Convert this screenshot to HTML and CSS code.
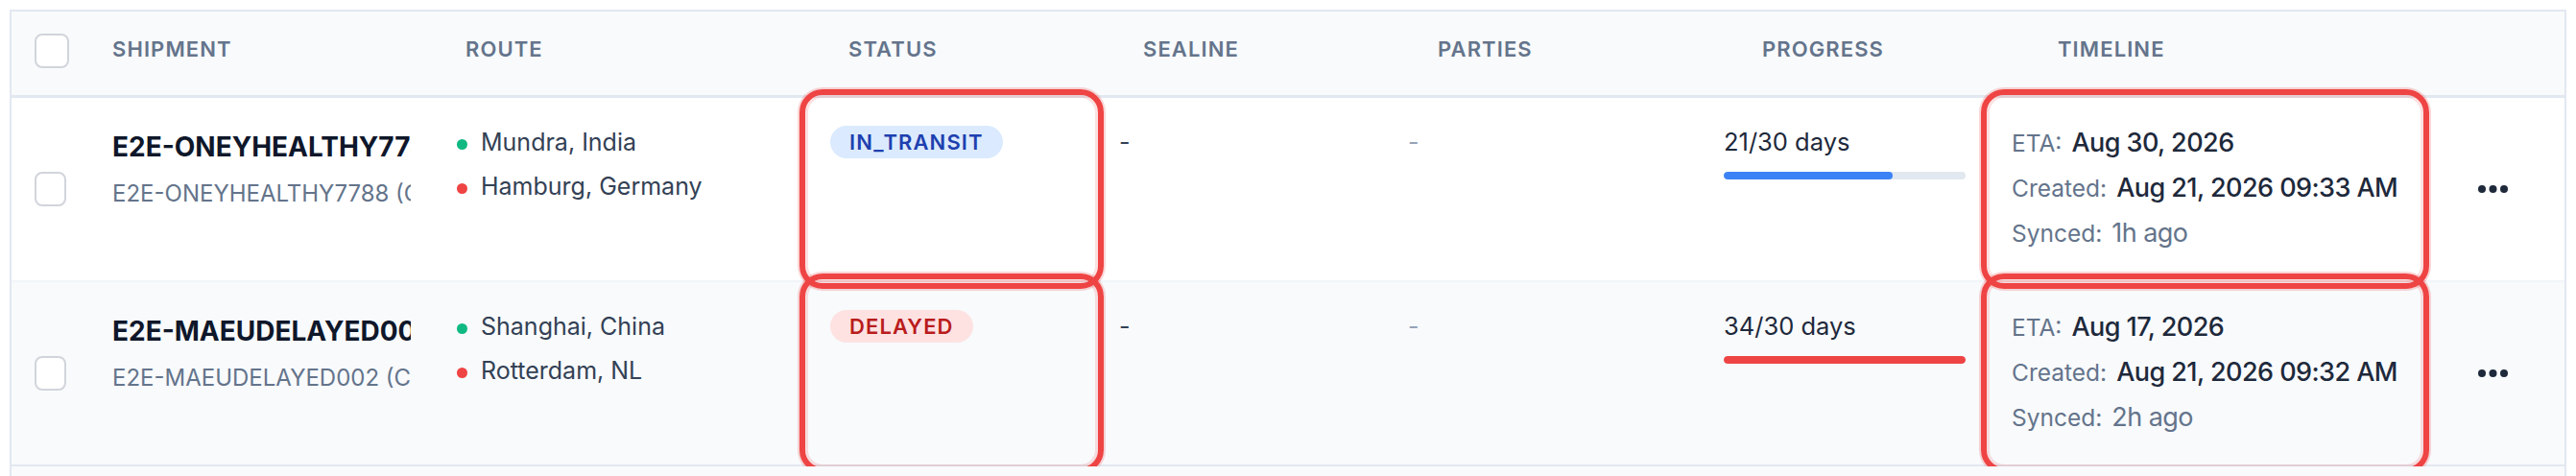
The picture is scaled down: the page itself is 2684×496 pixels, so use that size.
FILE: index.html
```html
<!DOCTYPE html>
<html lang="en">
<head>
<meta charset="utf-8">
<title>Shipments</title>
<link rel="stylesheet" href="styles.css">
</head>
<body>
<div class="table">
  <div class="thead">
    <div class="th th-check"><span class="checkbox"></span></div>
    <div class="th">Shipment</div>
    <div class="th">Route</div>
    <div class="th">Status</div>
    <div class="th">Sealine</div>
    <div class="th">Parties</div>
    <div class="th">Progress</div>
    <div class="th">Timeline</div>
    <div class="th"></div>
  </div>

  <div class="row">
    <div class="td td-check"><span class="checkbox"></span></div>
    <div class="td td-ship">
      <div class="ship-id">E2E-ONEYHEALTHY7788</div>
      <div class="ship-sub">E2E-ONEYHEALTHY7788 (ONE)</div>
    </div>
    <div class="td td-route">
      <div class="stop"><span class="dot dot-green"></span>Mundra, India</div>
      <div class="stop"><span class="dot dot-red"></span>Hamburg, Germany</div>
    </div>
    <div class="td td-status hl"><span class="badge badge-transit">IN_TRANSIT</span></div>
    <div class="td td-text">-</div>
    <div class="td td-text td-muted">-</div>
    <div class="td td-progress">
      <div class="prog-text">21/30 days</div>
      <div class="bar"><div class="fill fill-blue" style="width:70%"></div></div>
    </div>
    <div class="td td-timeline hl">
      <div class="tl"><span class="tl-label">ETA:</span><span class="tl-value">Aug 30, 2026</span></div>
      <div class="tl"><span class="tl-label">Created:</span><span class="tl-value">Aug 21, 2026 09:33 AM</span></div>
      <div class="tl"><span class="tl-label">Synced:</span><span class="tl-value tl-muted">1h ago</span></div>
    </div>
    <div class="td td-actions">
      <svg class="more" width="31" height="8" viewBox="0 0 31 8"><circle cx="4" cy="4" r="4"/><circle cx="15.5" cy="4" r="4"/><circle cx="27" cy="4" r="4"/></svg>
    </div>
  </div>

  <div class="row row-alt">
    <div class="td td-check"><span class="checkbox"></span></div>
    <div class="td td-ship">
      <div class="ship-id">E2E-MAEUDELAYED002</div>
      <div class="ship-sub">E2E-MAEUDELAYED002 (CMA)</div>
    </div>
    <div class="td td-route">
      <div class="stop"><span class="dot dot-green"></span>Shanghai, China</div>
      <div class="stop"><span class="dot dot-red"></span>Rotterdam, NL</div>
    </div>
    <div class="td td-status hl"><span class="badge badge-delayed">DELAYED</span></div>
    <div class="td td-text">-</div>
    <div class="td td-text td-muted">-</div>
    <div class="td td-progress">
      <div class="prog-text">34/30 days</div>
      <div class="bar"><div class="fill fill-red" style="width:100%"></div></div>
    </div>
    <div class="td td-timeline hl">
      <div class="tl"><span class="tl-label">ETA:</span><span class="tl-value">Aug 17, 2026</span></div>
      <div class="tl"><span class="tl-label">Created:</span><span class="tl-value">Aug 21, 2026 09:32 AM</span></div>
      <div class="tl"><span class="tl-label">Synced:</span><span class="tl-value tl-muted">2h ago</span></div>
    </div>
    <div class="td td-actions">
      <svg class="more" width="31" height="8" viewBox="0 0 31 8"><circle cx="4" cy="4" r="4"/><circle cx="15.5" cy="4" r="4"/><circle cx="27" cy="4" r="4"/></svg>
    </div>
  </div>

  <div class="row-stub"></div>
</div>
</body>
</html>
```

FILE: styles.css
```css
* { box-sizing: border-box; }

html, body {
  margin: 0;
  height: 496px;
  overflow: hidden;
  background: #ffffff;
  font-family: Inter, "Noto Sans", sans-serif;
}

.table {
  width: 2664px;
  height: 486px;
  margin: 10px 0 0 10px;
  border: 2px solid #e2e8f0;
  border-bottom: none;
  display: flex;
  flex-direction: column;
  overflow: hidden;
}

.thead {
  display: grid;
  grid-template-columns: 81px 368px 399px 307px 307px 338px 308px 460px 92px;
  height: 90px;
  background: #f8fafc;
  border-bottom: 3px solid #e2e8f0;
}

.th {
  padding: 23px 24px 0;
  font-size: 22px;
  line-height: 32px;
  font-weight: 600;
  letter-spacing: 1.1px;
  text-transform: uppercase;
  color: #64748b;
  white-space: nowrap;
}

.checkbox {
  display: block;
  width: 36px;
  height: 36px;
  border: 2.5px solid #d1d5db;
  border-radius: 8px;
  background: #ffffff;
}

.row {
  display: grid;
  grid-template-columns: 81px 359px 389px 301px 301px 329px 300px 451px 149px;
  height: 192px;
  background: #ffffff;
  border-bottom: 2px solid #f1f5f9;
}

.row-alt {
  background: #f8fafc;
  border-bottom-color: #e2e8f0;
}

.row-stub {
  flex: 1;
  background: #f8fafc;
  position: relative;
  z-index: 2;
}

.td {
  padding: 32px 24px 0;
  min-width: 0;
}

.td-check {
  padding-top: 0;
  display: flex;
  align-items: center;
}

.ship-id,
.ship-sub {
  white-space: nowrap;
  overflow: hidden;
}

.ship-id {
  font-size: 28px;
  line-height: 38px;
  font-weight: 700;
  color: #0f172a;
}

.ship-sub {
  margin-top: 14px;
  font-size: 24px;
  line-height: 32px;
  color: #64748b;
}

.td-route {
  display: flex;
  flex-direction: column;
  gap: 18px;
}

.stop {
  display: flex;
  align-items: center;
  gap: 14px;
  font-size: 25px;
  line-height: 28px;
  color: #334155;
  white-space: nowrap;
}

.dot {
  width: 11px;
  height: 11px;
  border-radius: 50%;
  margin-top: 5px;
  flex: none;
}

.dot-green { background: #10b981; }
.dot-red { background: #ef4444; }

.td-status { padding-top: 29px; }

.badge {
  display: inline-block;
  height: 34px;
  padding: 0 20px;
  border-radius: 17px;
  font-size: 22px;
  line-height: 34px;
  font-weight: 600;
  letter-spacing: 1.1px;
}

.badge-transit { background: #dbeafe; color: #1e40af; }
.badge-delayed { background: #fee2e2; color: #b91c1c; }

.td-text {
  font-size: 25px;
  line-height: 28px;
  color: #334155;
}

.td-muted { color: #94a3b8; }

.prog-text {
  font-size: 25.5px;
  line-height: 28px;
  color: #1e293b;
}

.bar {
  margin-top: 17px;
  height: 8px;
  border-radius: 4px;
  background: #e2e8f0;
  overflow: hidden;
}

.fill { height: 100%; border-radius: 4px; }
.fill-blue { background: #3b82f6; }
.fill-red { background: #ef4444; }

.td-timeline {
  padding-top: 29px;
  display: flex;
  flex-direction: column;
  gap: 11px;
}

.tl {
  display: flex;
  align-items: baseline;
  gap: 10px;
  line-height: 36px;
  white-space: nowrap;
}

.tl-label {
  font-size: 24.5px;
  color: #64748b;
}

.tl-value {
  font-size: 27px;
  font-weight: 500;
  letter-spacing: -0.55px;
  color: #1e293b;
}

.tl-muted {
  font-weight: 400;
  color: #64748b;
}

.td-actions {
  padding: 0;
  display: flex;
  align-items: center;
  justify-content: center;
}

.more { fill: #1e293b; }

.hl { position: relative; }

.hl::after {
  content: "";
  position: absolute;
  top: -9px;
  bottom: -9px;
  left: -8px;
  right: -8px;
  border: 6px solid #ef4444;
  border-radius: 24px;
  box-shadow: 0 0 0 2px rgba(239, 68, 68, 0.22), inset 0 0 0 3px rgba(239, 68, 68, 0.16);
  pointer-events: none;
  z-index: 1;
}
```
